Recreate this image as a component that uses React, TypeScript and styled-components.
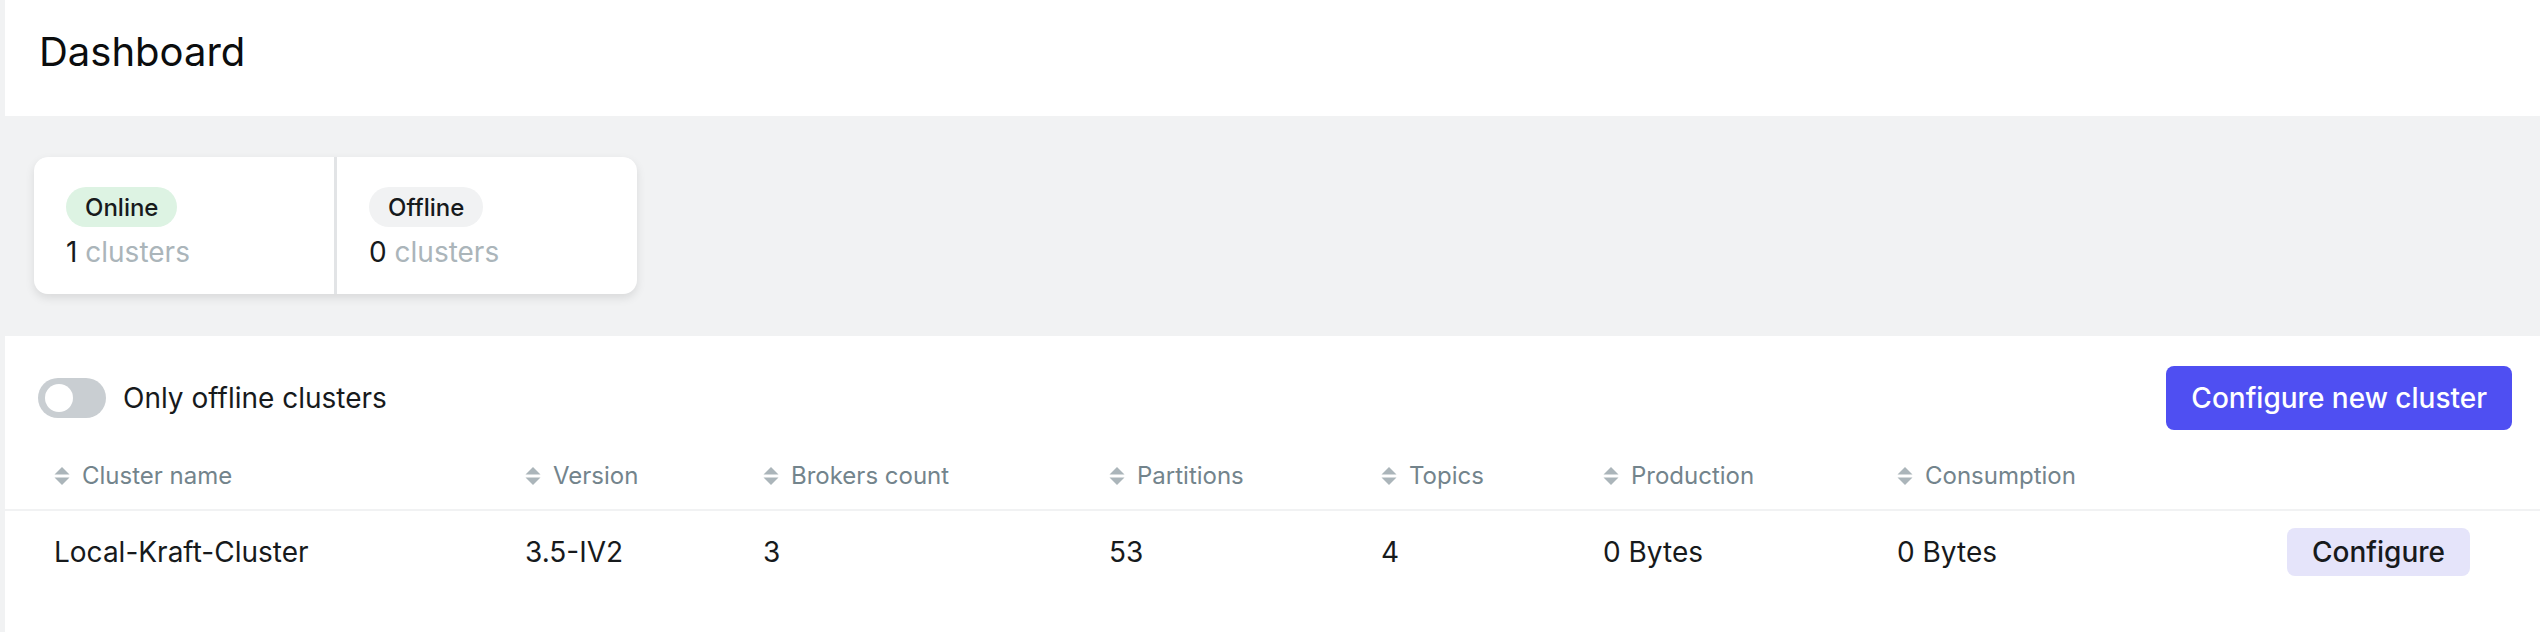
import styled, { createGlobalStyle } from "styled-components";

const GlobalStyle = createGlobalStyle`
  html, body {
    margin: 0;
    padding: 0;
    background: #ffffff;
  }
  body {
    font-family: "Inter", "Noto Sans", sans-serif;
    color: #171a1c;
  }
`;

const Page = styled.div`
  min-height: 632px;
  border-left: 5px solid #f1f2f3;
  background: #ffffff;
`;

const Header = styled.header`
  height: 116px;
  box-sizing: border-box;
  display: flex;
  align-items: center;
  padding: 0 34px 12px;
`;

const Title = styled.h1`
  margin: 0;
  font-size: 40px;
  font-weight: 400;
  line-height: 1;
  color: #0b0d0e;
`;

const MetricsBand = styled.section`
  background: #f1f2f3;
  padding: 41px 29px 42px;
`;

const CardGroup = styled.div`
  display: inline-flex;
  gap: 3px;
  background: #e2e4e6;
  border-radius: 14px;
  overflow: hidden;
  box-shadow: 0 4px 10px rgba(0, 0, 0, 0.1);
`;

const Card = styled.div`
  width: 300px;
  height: 137px;
  box-sizing: border-box;
  padding: 30px 32px 0;
  background: #ffffff;
  display: flex;
  flex-direction: column;
  align-items: flex-start;
`;

const Badge = styled.span<{ $tone: "green" | "gray" }>`
  height: 40px;
  display: inline-flex;
  align-items: center;
  padding: 0 19px;
  border-radius: 20px;
  font-size: 24px;
  font-weight: 500;
  background: ${(p) => (p.$tone === "green" ? "#ddf3e3" : "#f1f2f3")};
  color: #171a1c;
`;

const Count = styled.div`
  margin-top: 7px;
  font-size: 28px;
  line-height: 36px;
  color: #171a1c;
`;

const Unit = styled.span`
  color: #abb5ba;
`;

const Toolbar = styled.div`
  display: flex;
  align-items: center;
  justify-content: space-between;
  padding: 30px 28px 0 33px;
`;

const SwitchLabel = styled.label`
  display: flex;
  align-items: center;
  gap: 17px;
  font-size: 28px;
  color: #171a1c;
`;

const Switch = styled.span`
  position: relative;
  width: 68px;
  height: 40px;
  border-radius: 20px;
  background: #c9ced2;
  flex: none;

  &::after {
    content: "";
    position: absolute;
    left: 7px;
    top: 6px;
    width: 28px;
    height: 28px;
    border-radius: 50%;
    background: #ffffff;
  }
`;

const PrimaryButton = styled.button`
  height: 64px;
  padding: 0 25px;
  border: none;
  border-radius: 8px;
  background: #4f4ff2;
  color: #ffffff;
  font-family: inherit;
  font-size: 28px;
  font-weight: 500;
`;

const Table = styled.table`
  width: 100%;
  margin-top: 13px;
  border-collapse: collapse;
  table-layout: fixed;
`;

const Th = styled.th`
  height: 66px;
  padding: 0;
  text-align: left;
  font-size: 24px;
  font-weight: 400;
  color: #73848c;
  border-bottom: 2px solid #f1f2f3;

  &:first-child {
    padding-left: 49px;
  }
`;

const HeadInner = styled.span`
  display: inline-flex;
  align-items: center;
  gap: 12px;
`;

const Td = styled.td<{ $action?: boolean }>`
  height: 82px;
  padding: 0;
  font-size: 28px;
  color: #171a1c;
  text-align: ${(p) => (p.$action ? "right" : "left")};
  padding-right: ${(p) => (p.$action ? "70px" : "0")};

  &:first-child {
    padding-left: 49px;
  }
`;

const SecondaryButton = styled.button`
  height: 48px;
  padding: 0 25px;
  border: none;
  border-radius: 8px;
  background: #e5e4fa;
  color: #171a1c;
  font-family: inherit;
  font-size: 28px;
  font-weight: 500;
`;

const SortIcon = () => (
  <svg width="16" height="18" viewBox="0 0 16 18" aria-hidden>
    <polygon points="8,0 15.5,7.5 0.5,7.5" fill="#abb5ba" />
    <polygon points="0.5,10.5 15.5,10.5 8,18" fill="#abb5ba" />
  </svg>
);

const columns = [
  { title: "Cluster name", width: 520 },
  { title: "Version", width: 238 },
  { title: "Brokers count", width: 346 },
  { title: "Partitions", width: 272 },
  { title: "Topics", width: 222 },
  { title: "Production", width: 294 },
  { title: "Consumption", width: 350 },
];

const clusters = [
  {
    name: "Local-Kraft-Cluster",
    version: "3.5-IV2",
    brokers: 3,
    partitions: 53,
    topics: 4,
    production: "0 Bytes",
    consumption: "0 Bytes",
  },
];

export default function App() {
  return (
    <>
      <GlobalStyle />
      <Page>
        <Header>
          <Title>Dashboard</Title>
        </Header>

        <MetricsBand>
          <CardGroup>
            <Card>
              <Badge $tone="green">Online</Badge>
              <Count>
                1 <Unit>clusters</Unit>
              </Count>
            </Card>
            <Card>
              <Badge $tone="gray">Offline</Badge>
              <Count>
                0 <Unit>clusters</Unit>
              </Count>
            </Card>
          </CardGroup>
        </MetricsBand>

        <Toolbar>
          <SwitchLabel>
            <Switch />
            Only offline clusters
          </SwitchLabel>
          <PrimaryButton>Configure new cluster</PrimaryButton>
        </Toolbar>

        <Table>
          <colgroup>
            {columns.map((c) => (
              <col key={c.title} style={{ width: c.width }} />
            ))}
            <col />
          </colgroup>
          <thead>
            <tr>
              {columns.map((c) => (
                <Th key={c.title}>
                  <HeadInner>
                    <SortIcon />
                    {c.title}
                  </HeadInner>
                </Th>
              ))}
              <Th />
            </tr>
          </thead>
          <tbody>
            {clusters.map((c) => (
              <tr key={c.name}>
                <Td>{c.name}</Td>
                <Td>{c.version}</Td>
                <Td>{c.brokers}</Td>
                <Td>{c.partitions}</Td>
                <Td>{c.topics}</Td>
                <Td>{c.production}</Td>
                <Td>{c.consumption}</Td>
                <Td $action>
                  <SecondaryButton>Configure</SecondaryButton>
                </Td>
              </tr>
            ))}
          </tbody>
        </Table>
      </Page>
    </>
  );
}
